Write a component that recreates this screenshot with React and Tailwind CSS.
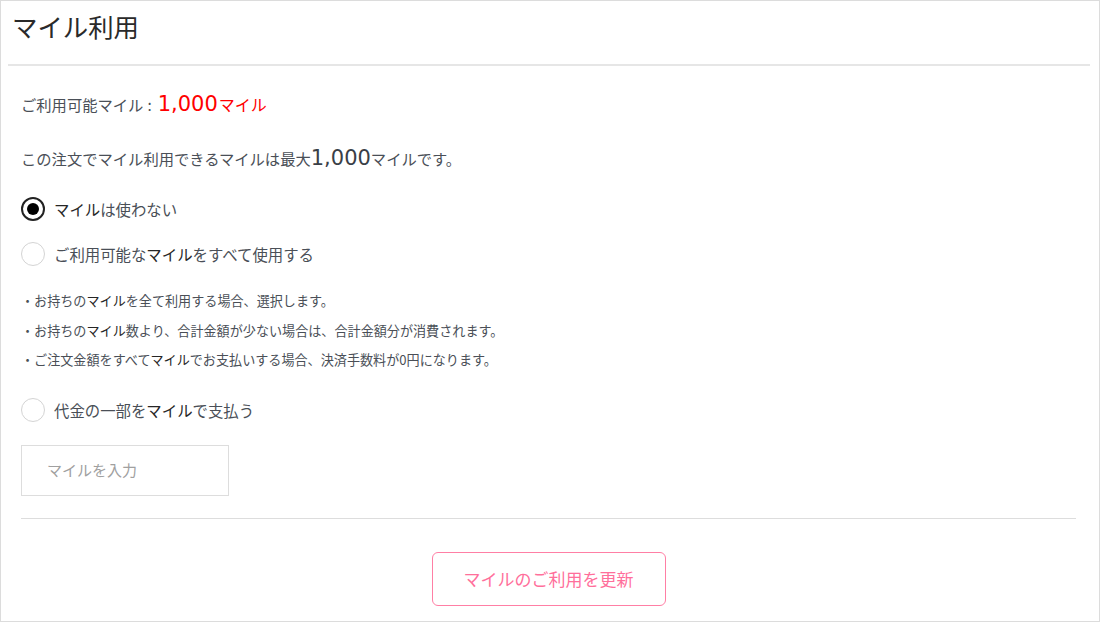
import React from "react";

const font = { fontFamily: '"Noto Sans CJK JP", "Noto Sans", sans-serif' };
const digitFont = { fontFamily: '"DejaVu Sans", "Noto Sans", sans-serif' };

function Radio({ checked, children }) {
  return (
    <div className="flex items-center h-[30px]">
      <span
        className={
          "w-[24px] h-[24px] rounded-full flex items-center justify-center shrink-0 " +
          (checked ? "border-[2px] border-[#222]" : "border border-[#d4d4d4]")
        }
      >
        {checked && <span className="w-[12px] h-[12px] rounded-full bg-black" />}
      </span>
      <span className="ml-[9px] text-[15.4px] text-[#4a4f57] leading-[30px]">{children}</span>
    </div>
  );
}

const M = () => <span className="text-[#262626]">マイル</span>;

export default function App() {
  return (
    <div
      className="w-[1100px] h-[622px] border border-[#dcdcdc] bg-white overflow-hidden"
      style={font}
    >
      <div className="h-[63px] pt-[7px] pl-[11px]">
        <h1 className="text-[25.4px] leading-[36px] text-[#2a2a2a] font-normal">マイル利用</h1>
      </div>
      <div className="ml-[7px] mr-[9px] h-[2px] bg-[#e6e6e6]" />
      <div className="pl-[20px] pr-[23px]">
        <div className="mt-[23px] h-[30px] flex items-center text-[15.3px] text-[#4a4f57]">
          <span>ご利用可能マイル</span>
          <span className="ml-[4px] mr-[6px]">:</span>
          <span className="text-[21px] text-[#ff0000] leading-[30px]" style={digitFont}>1,000</span>
          <span className="text-[16px] text-[#ff0000] ml-[1px]">マイル</span>
        </div>
        <div className="mt-[24px] h-[30px] flex items-center text-[15.3px] text-[#4a4f57]">
          <span>この注文でマイル利用できるマイルは最大</span>
          <span className="text-[21px] leading-[30px] text-[#3a3f47]" style={digitFont}>1,000</span>
          <span>マイルです。</span>
        </div>
        <div className="mt-[21px]">
          <Radio checked>
            <M />は使わない
          </Radio>
        </div>
        <div className="mt-[15px]">
          <Radio>
            ご利用可能な<M />をすべて使用する
          </Radio>
        </div>
        <div className="mt-[17px] text-[13.1px] text-[#4a4f57]">
          <div className="h-[30px] leading-[30px]">・お持ちの<M />を全て利用する場合、選択します。</div>
          <div className="h-[29px] leading-[29px]">・お持ちの<M />数より、合計金額が少ない場合は、合計金額分が消費されます。</div>
          <div className="h-[30px] leading-[30px]">・ご注文金額をすべて<M />でお支払いする場合、決済手数料が0円になります。</div>
        </div>
        <div className="mt-[20px]">
          <Radio>
            代金の一部を<M />で支払う
          </Radio>
        </div>
        <div className="mt-[20px] w-[208px] h-[51px] border border-[#dddddd] flex items-center pl-[25px] text-[15px] text-[#a0a0a0]">
          マイルを入力
        </div>
        <div className="mt-[22px] h-px bg-[#dddddd]" />
        <div className="mt-[33px] flex justify-center">
          <button className="w-[234px] h-[54px] rounded-[6px] border-[1.5px] border-[#ff7fa5] text-[#ff6f9b] text-[17px] bg-white">
            マイルのご利用を更新
          </button>
        </div>
      </div>
    </div>
  );
}
